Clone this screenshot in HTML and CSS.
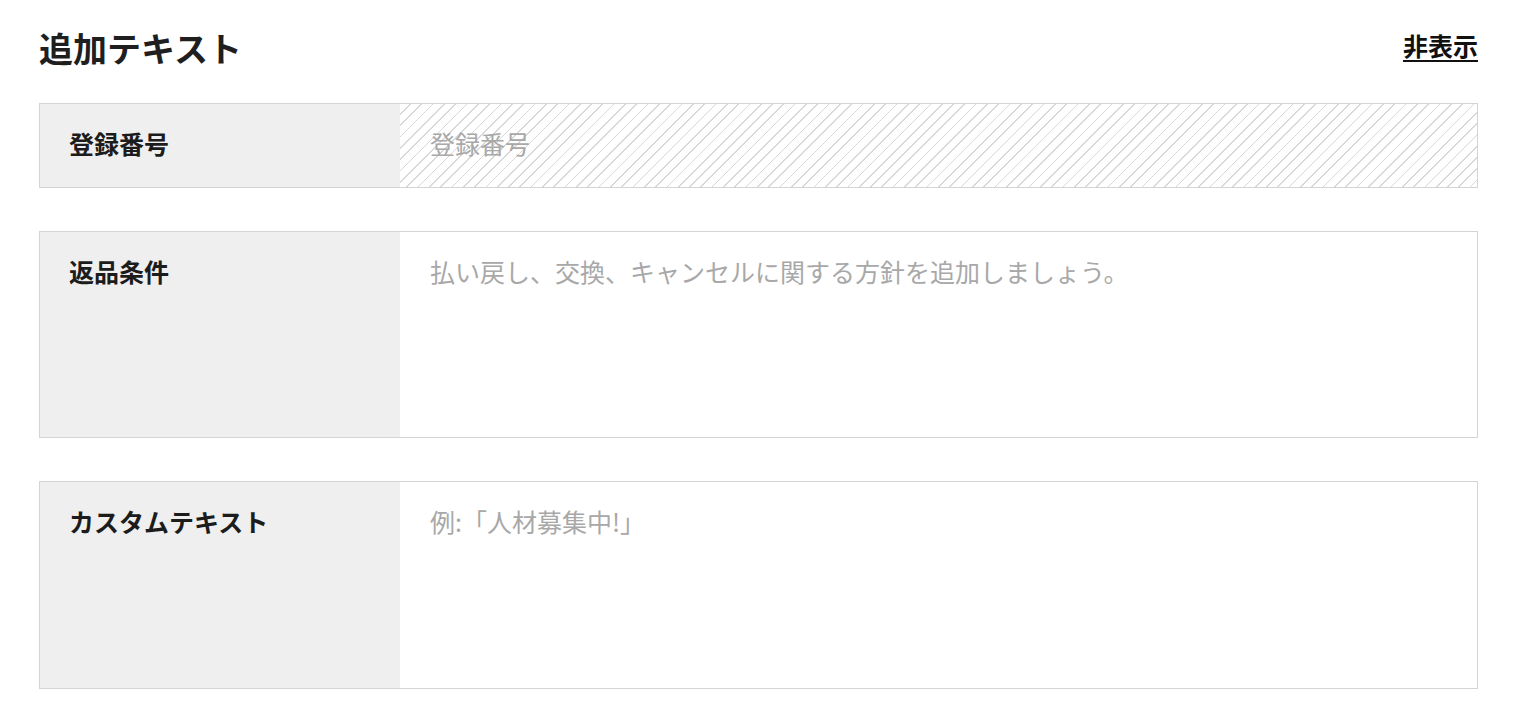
FILE: index.html
```html
<!DOCTYPE html>
<html lang="ja">
<head>
<meta charset="utf-8">
<link rel="stylesheet" href="styles.css">
</head>
<body>
<div class="page">
  <div class="header">
    <h1 class="title">追加テキスト</h1>
    <a class="hide-link" href="#">非表示</a>
  </div>
  <div class="rows">
    <div class="row">
      <div class="label">登録番号</div>
      <div class="field hatched"><span class="ph">登録番号</span></div>
    </div>
    <div class="row tall">
      <div class="label">返品条件</div>
      <div class="field"><span class="ph">払い戻し、交換、キャンセルに関する方針を追加しましょう。</span></div>
    </div>
    <div class="row tall last">
      <div class="label">カスタムテキスト</div>
      <div class="field"><span class="ph">例:「人材募集中!」</span></div>
    </div>
  </div>
</div>
</body>
</html>
```
FILE: styles.css
```css
* { box-sizing: border-box; }
html, body { margin: 0; padding: 0; background: #fff; }
body {
  font-family: "Noto Sans CJK JP", "Noto Sans", sans-serif;
  color: #1f1f1f;
}
.page {
  padding: 22px 56px 0 39px;
}
.header {
  display: flex;
  justify-content: space-between;
  align-items: center;
  height: 52px;
  margin-bottom: 29px;
}
.title {
  margin: 0;
  font-size: 34px;
  font-weight: 700;
  line-height: 52px;
  letter-spacing: 0;
}
.hide-link {
  font-size: 25px;
  font-weight: 700;
  color: #111;
  text-decoration: underline;
  text-underline-offset: 4px;
  text-decoration-thickness: 2px;
  margin-top: -6px;
}
.rows {
  display: flex;
  flex-direction: column;
  gap: 43px;
}
.row {
  display: flex;
  border: 1px solid #d4d4d4;
  height: 85px;
}
.row.tall { height: 207px; }
.row.last { height: 208px; }
.label {
  width: 360px;
  flex: none;
  background: #efefef;
  padding: 23px 29px;
  font-size: 25px;
  font-weight: 700;
  line-height: 32px;
  color: #1c1c1c;
}
.field {
  flex: 1;
  padding: 23px 30px;
  font-size: 25px;
  line-height: 32px;
  background: #fff;
}
.field.hatched {
  background: repeating-linear-gradient(135deg, #fff 0, #fff 6.8px, #d8d8d8 6.8px, #d8d8d8 8px);
}
.ph { color: #a8a8a8; }
```
